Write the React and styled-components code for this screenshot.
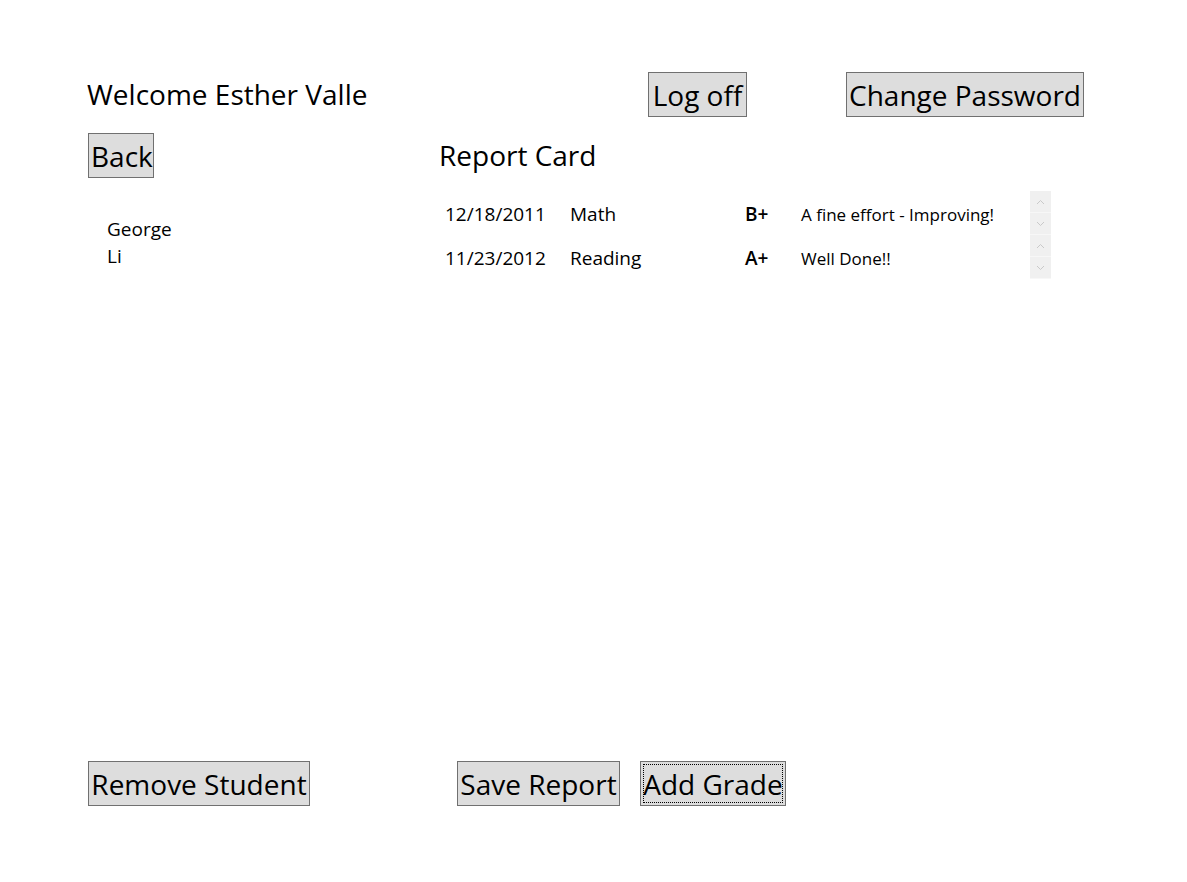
import React from 'react';
import styled, {createGlobalStyle} from 'styled-components';

const GlobalStyle = createGlobalStyle`
  html, body {
    margin: 0;
    padding: 0;
    background: #ffffff;
  }
  body {
    font-family: "Open Sans", "Noto Sans", sans-serif;
    color: #000000;
  }
`;

const Page = styled.div`
  width: 1187px;
  height: 882px;
  box-sizing: border-box;
  padding: 72px 0 0 88px;
  display: flex;
  flex-direction: column;
`;

const HeaderRow = styled.div`
  display: flex;
  align-items: flex-start;
  height: 61px;
`;

const Welcome = styled.div`
  width: 561px;
  margin-left: -1px;
  margin-top: 4px;
  font-size: 28px;
  line-height: 36px;
`;

const WinButton = styled.button`
  position: relative;
  height: 45px;
  box-sizing: border-box;
  margin: 0;
  padding: 0 2px;
  background: #dddddd;
  border: 1px solid #707070;
  border-radius: 0;
  font-family: "Open Sans", "Noto Sans", sans-serif;
  font-size: ${p => p.$size || 28}px;
  line-height: 42px;
  color: #000000;
  white-space: nowrap;
  width: ${p => p.$w}px;
  margin-left: ${p => p.$ml || 0}px;

  ${p =>
    p.$focused &&
    `
    &::after {
      content: '';
      position: absolute;
      inset: 2px;
      border: 1px dotted #000000;
      pointer-events: none;
    }
  `}
`;

const SubRow = styled.div`
  display: flex;
  align-items: flex-start;
  height: 58px;
`;

const BackCell = styled.div`
  width: 351px;
`;

const Title = styled.div`
  font-size: 28px;
  line-height: 36px;
  margin-top: 4px;
`;

const Body = styled.div`
  flex: 1;
  display: flex;
  align-items: flex-start;
`;

const StudentList = styled.div`
  width: 357px;
  box-sizing: border-box;
  padding: 25px 0 0 19px;
  font-size: 19px;
  line-height: 27px;
`;

const Student = styled.div`
  width: 72px;
`;

const GradeTable = styled.div`
  display: flex;
  flex-direction: column;
`;

const GradeRow = styled.div`
  display: flex;
  align-items: center;
  height: 44px;
`;

const Cell = styled.div`
  width: ${p => p.$w}px;
  padding-top: 2px;
  font-size: ${p => p.$size || 19}px;
  font-weight: ${p => p.$weight || 400};
  white-space: nowrap;
`;

const Spinner = styled.div`
  width: 21px;
  height: 44px;
  background: #f0f0f0;
  display: flex;
  flex-direction: column;
`;

const SpinButton = styled.div`
  height: 22px;
  display: flex;
  align-items: center;
  justify-content: center;
  border-bottom: 1px solid #f7f7f7;
  box-sizing: border-box;
`;

const BottomRow = styled.div`
  display: flex;
  align-items: flex-start;
  height: 121px;
`;

const Chevron = ({up}) => (
  <svg width="9" height="6" viewBox="0 0 9 6">
    <path
      d={up ? 'M1 5 L4.5 1.5 L8 5' : 'M1 1 L4.5 4.5 L8 1'}
      fill="none"
      stroke="#c9c9c9"
      strokeWidth="1"
    />
  </svg>
);

const grades = [
  {date: '12/18/2011', subject: 'Math', grade: 'B+', comment: 'A fine effort - Improving!'},
  {date: '11/23/2012', subject: 'Reading', grade: 'A+', comment: 'Well Done!!'},
];

export default function App() {
  return (
    <>
      <GlobalStyle />
      <Page>
        <HeaderRow>
          <Welcome>Welcome Esther Valle</Welcome>
          <WinButton $w={99}>Log off</WinButton>
          <WinButton $w={238} $ml={99}>
            Change Password
          </WinButton>
        </HeaderRow>

        <SubRow>
          <BackCell>
            <WinButton $w={66}>Back</WinButton>
          </BackCell>
          <Title>Report Card</Title>
        </SubRow>

        <Body>
          <StudentList>
            <Student>George Li</Student>
          </StudentList>
          <GradeTable>
            {grades.map(g => (
              <GradeRow key={g.date}>
                <Cell $w={125}>{g.date}</Cell>
                <Cell $w={175}>{g.subject}</Cell>
                <Cell $w={56} $weight={600}>{g.grade}</Cell>
                <Cell $w={229} $size={17}>{g.comment}</Cell>
                <Spinner>
                  <SpinButton><Chevron up /></SpinButton>
                  <SpinButton><Chevron /></SpinButton>
                </Spinner>
              </GradeRow>
            ))}
          </GradeTable>
        </Body>

        <BottomRow>
          <WinButton $w={222}>Remove Student</WinButton>
          <WinButton $w={163} $ml={147}>Save Report</WinButton>
          <WinButton $w={146} $ml={20} $focused>
            Add Grade
          </WinButton>
        </BottomRow>
      </Page>
    </>
  );
}
